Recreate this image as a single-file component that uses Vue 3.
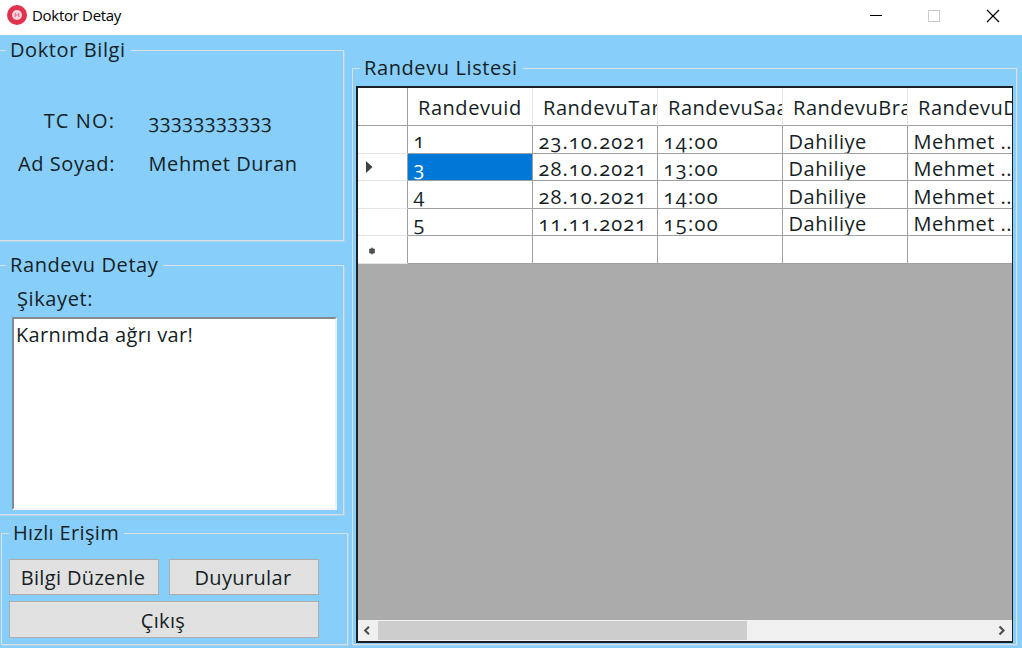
<script setup>
const columns = ['Randevuid', 'RandevuTar', 'RandevuSaat', 'RandevuBra', 'RandevuD']
const rows = [
  { cells: ['1', '23.10.2021', '14:00', 'Dahiliye', 'Mehmet ...'] },
  { cells: ['3', '28.10.2021', '13:00', 'Dahiliye', 'Mehmet ...'], current: true },
  { cells: ['4', '28.10.2021', '14:00', 'Dahiliye', 'Mehmet ...'] },
  { cells: ['5', '11.11.2021', '15:00', 'Dahiliye', 'Mehmet ...'] },
  { cells: ['', '', '', '', ''], fresh: true },
]
</script>

<template>
  <div class="window">
    <header class="titlebar">
      <svg class="logo" width="20" height="20" viewBox="0 0 20 20">
        <circle cx="10" cy="10" r="10" fill="#e0314f" />
        <circle cx="10" cy="10" r="5" fill="#f6d5dc" />
        <path d="M8.3 8v4M11.7 8v4M8.3 10h3.4" stroke="#e8748a" stroke-width="1.2" />
      </svg>
      <span class="title">Doktor Detay</span>
      <svg class="controls" width="140" height="34" viewBox="0 0 140 34" fill="none">
        <path d="M0 15.5h12" stroke="#000" />
        <rect x="58.500" y="10.500" width="11" height="11" stroke="#ccc" />
        <path d="M117 10l12 12M129 10l-12 12" stroke="#000" stroke-width="1.200" />
      </svg>
    </header>
    <main class="body">
      <div class="left">
        <section class="group info">
          <h2 class="legend">Doktor Bilgi</h2>
          <dl>
            <dt class="tc">TC NO:</dt>
            <dd class="num">33333333333</dd>
            <dt>Ad Soyad:</dt>
            <dd class="name">Mehmet Duran</dd>
          </dl>
        </section>
        <section class="group detail">
          <h2 class="legend">Randevu Detay</h2>
          <div class="label">Şikayet:</div>
          <div class="memo">Karnımda ağrı var!</div>
        </section>
        <section class="group quick">
          <h2 class="legend">Hızlı Erişim</h2>
          <div class="buttons">
            <button>Bilgi Düzenle</button>
            <button>Duyurular</button>
            <button class="wide">Çıkış</button>
          </div>
        </section>
      </div>
      <section class="group list">
        <h2 class="legend">Randevu Listesi</h2>
        <div class="gridview">
          <div class="row head">
            <div class="rh"></div>
            <div v-for="c in columns" :key="c" class="cell"><span>{{ c }}</span></div>
          </div>
          <div v-for="(r, i) in rows" :key="i" class="row" :class="{ fresh: r.fresh }">
            <div class="rh">
              <svg v-if="r.current" width="7" height="12" viewBox="0 0 7 12"><path d="M0 0L6.500 6L0 12z" fill="#404040" /></svg>
              <svg v-if="r.fresh" class="star" width="8" height="8" viewBox="0 0 8 8"><circle cx="4" cy="4" r="2.800" fill="#404040" /><path d="M4 .5v7M1 2l6 4M1 6l6-4" stroke="#555" /></svg>
            </div>
            <div v-for="(c, j) in r.cells" :key="j" class="cell" :class="['c' + j, { selected: r.current && j === 0 }]"><span>{{ c }}</span></div>
          </div>
          <div class="empty"></div>
          <div class="scroll">
            <svg width="21" height="20" viewBox="0 0 21 20"><path d="M11.500 6.500L7.500 10.500L11.500 14.500" /></svg>
            <div class="thumb"></div>
            <svg class="right" width="21" height="20" viewBox="0 0 21 20"><path d="M8.500 6.500L12.500 10.500L8.500 14.500" /></svg>
          </div>
        </div>
      </section>
    </main>
  </div>
</template>

<style>
body { margin: 0; overflow: hidden; }
</style>

<style scoped>
* { box-sizing: border-box; }
.window { width: 1022px; height: 648px; display: flex; flex-direction: column; background: #87cefa; overflow: hidden; font: 20px/26px "Open Sans", "Noto Sans", sans-serif; color: #151e25; font-variant-numeric: oldstyle-nums; letter-spacing: 0.6px; }
.titlebar { height: 35px; background: #fff; display: flex; flex: none; padding-left: 7px; }
.logo { margin-top: 5px; }
.title { font-size: 15px; line-height: 31px; letter-spacing: -0.3px; margin-left: 5px; color: #000; }
.controls { margin-left: auto; margin-right: 12px; }
.body { flex: 1; display: flex; }
.left { width: 348px; flex: none; }
.group { position: relative; border: 1px solid #dadfe2; box-shadow: 1px 1px 0 #a6d3ef; }
.legend { position: absolute; top: -14px; left: 10px; margin: 0; padding: 0 5px 0 4px; font-size: 20px; line-height: 26px; font-weight: 400; background: #87cefa; white-space: nowrap; }
.info { margin: 15px 4px 0 -5px; height: 191px; padding-top: 57px; }
.info dl { margin: 0; display: grid; grid-template-columns: 119px 1fr; column-gap: 33.500px; row-gap: 17px; }
.info dt { text-align: right; }
.info .tc { letter-spacing: 1.1px; }
.info dd { margin: 0; }
.info .num { letter-spacing: 0.35px; padding-top: 1px; height: 26px; }
.detail { margin: 24px 4px 0 -5px; height: 250px; padding: 20px 6px 0 16px; }
.label { padding-left: 5px; line-height: 26px; }
.memo { margin-top: 5px; height: 193px; background: #fff; border: 2px solid; border-color: #828a8f #eee #f4f4f4 #828a8f; padding: 3px 2px; letter-spacing: 0.35px; }
.quick { margin: 18px 0 0 1px; height: 112px; padding: 25px 0 0 7px; }
.quick .legend { left: 7px; letter-spacing: 0.35px; }
.buttons { display: grid; grid-template-columns: 150px 150px; column-gap: 10px; row-gap: 6px; }
button { height: 36px; background: #e1e1e1; border: 1px solid #adadad; font: inherit; letter-spacing: 0.35px; color: inherit; padding: 1px 2px 0 0; }
.wide { grid-column: span 2; height: 37px; padding-top: 2px; }
.list { margin: 33px 5px 3px 4px; flex: 1; min-width: 0; padding: 17px 3px 1px 3px; display: flex; }
.list .legend { left: 7px; }
.gridview { flex: 1; min-width: 0; border: 2px solid #1b2024; border-right-width: 1px; background: #ababab; overflow: hidden; display: flex; flex-direction: column; }
.row { display: grid; grid-template-columns: 50px repeat(5, 125px); height: 27.500px; flex: none; }
.head { height: 38px; }
.rh { background: #fff; border-right: 1px solid #a0a0a0; border-bottom: 1px solid #e5e5e5; display: flex; align-items: center; padding-left: 7.500px; }
.head .rh { border-bottom-color: #a0a0a0; }
.star { margin-left: 2px; margin-top: 3px; }
.cell { background: #fff; border-right: 1px solid #a0a0a0; border-bottom: 1px solid #a0a0a0; overflow: hidden; white-space: nowrap; padding: 2.500px 0 0 5.500px; letter-spacing: 0.5px; }
.c0 { padding-top: 2px; }
.c1 { letter-spacing: 1.1px; }
.c2 { letter-spacing: 1.3px; }
.head .cell { border-right-color: #e5e5e5; padding: 7px 0 0 10px; letter-spacing: 0.55px; }
.cell.selected { background: #0078d7; color: #fff; }
.empty { flex: 1; }
.scroll { height: 21px; background: #f0f0f0; display: flex; flex: none; }
.scroll svg { flex: none; fill: none; stroke: #505050; stroke-width: 2.200; }
.scroll svg:first-child { width: 20px; }
.thumb { width: 369px; background: #cdcdcd; margin: 1px 0; }
.right { margin-left: auto; }
</style>
